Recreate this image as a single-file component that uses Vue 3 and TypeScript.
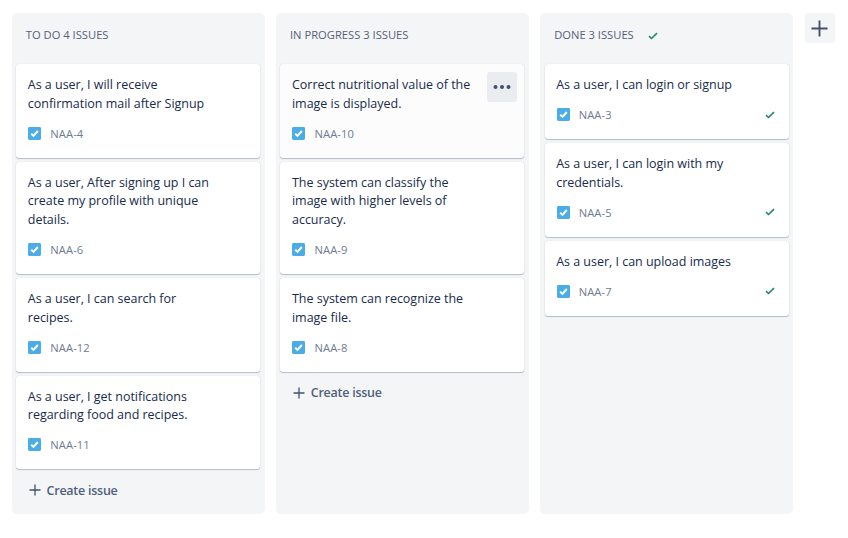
<script setup lang="ts">
interface Issue {
  key: string
  lines: string[]
  hovered?: boolean
}

interface Column {
  name: string
  issues: Issue[]
  done?: boolean
}

const columns: Column[] = [
  {
    name: 'TO DO',
    issues: [
      { key: 'NAA-4', lines: ['As a user, I will receive', 'confirmation mail after Signup'] },
      { key: 'NAA-6', lines: ['As a user, After signing up I can', 'create my profile with unique', 'details.'] },
      { key: 'NAA-12', lines: ['As a user, I can search for', 'recipes.'] },
      { key: 'NAA-11', lines: ['As a user, I get notifications', 'regarding food and recipes.'] },
    ],
  },
  {
    name: 'IN PROGRESS',
    issues: [
      { key: 'NAA-10', lines: ['Correct nutritional value of the', 'image is displayed.'], hovered: true },
      { key: 'NAA-9', lines: ['The system can classify the', 'image with higher levels of', 'accuracy.'] },
      { key: 'NAA-8', lines: ['The system can recognize the', 'image file.'] },
    ],
  },
  {
    name: 'DONE',
    done: true,
    issues: [
      { key: 'NAA-3', lines: ['As a user, I can login or signup'] },
      { key: 'NAA-5', lines: ['As a user, I can login with my', 'credentials.'] },
      { key: 'NAA-7', lines: ['As a user, I can upload images'] },
    ],
  },
]
</script>

<template>
  <main class="board">
    <section v-for="column in columns" :key="column.name" class="column">
      <header class="column-header">
        <h2>{{ column.name }} {{ column.issues.length }} ISSUES</h2>
        <svg v-if="column.done" class="tick" viewBox="0 0 10 8"><path d="M1 4.2 3.5 6.5 9 1.2" /></svg>
      </header>
      <div class="cards">
        <article v-for="issue in column.issues" :key="issue.key" class="card" :class="{ hovered: issue.hovered }">
          <p class="summary">
            <span v-for="line in issue.lines" :key="line">{{ line }}</span>
          </p>
          <footer class="meta">
            <svg class="task" viewBox="0 0 13 13">
              <rect width="13" height="13" rx="1.4" />
              <path d="M3.2 6.7 5.5 8.9 9.8 4" />
            </svg>
            <span class="key">{{ issue.key }}</span>
            <svg v-if="column.done" class="tick" viewBox="0 0 10 8"><path d="M1 4.2 3.5 6.5 9 1.2" /></svg>
          </footer>
          <button v-if="issue.hovered" class="more" aria-label="More actions">
            <svg viewBox="0 0 18 6"><circle cx="2.5" cy="3" r="2" /><circle cx="9" cy="3" r="2" /><circle cx="15.5" cy="3" r="2" /></svg>
          </button>
        </article>
      </div>
      <button v-if="!column.done" class="create">
        <svg viewBox="0 0 12 12"><path d="M6 .5v11M.5 6h11" /></svg>
        <span>Create issue</span>
      </button>
    </section>
    <button class="add-column" aria-label="Add column">
      <svg viewBox="0 0 18 18"><path d="M9 .5v17M.5 9h17" /></svg>
    </button>
  </main>
</template>

<style>
body {
  background: #fff;
}
</style>

<style scoped>
.board {
  box-sizing: border-box;
  display: flex;
  align-items: flex-start;
  gap: 11.2px;
  height: 538px;
  padding: 13px 12px 24px;
  font-family: "Segoe UI", "Open Sans", "Noto Sans", sans-serif;
}
button {
  border: 0;
  margin: 0;
  padding: 0;
  font-family: inherit;
}
.column {
  box-sizing: border-box;
  flex: none;
  width: 253px;
  height: 501px;
  padding: 0 4.8px 0 4.3px;
  border-radius: 5px;
  background: #f4f5f7;
}
.column-header {
  display: flex;
  align-items: center;
  gap: 14px;
  height: 44px;
  margin-bottom: 7px;
  padding-left: 9.5px;
}
h2 {
  margin: 0;
  font-size: 11.2px;
  font-weight: 500;
  line-height: 16px;
  letter-spacing: 0;
  color: #55617a;
}
.tick {
  width: 10px;
  height: 8px;
  fill: none;
  stroke: #1f8b60;
  stroke-width: 1.6;
}
.column-header .tick {
  margin-top: 2px;
}
.cards {
  display: flex;
  flex-direction: column;
  gap: 3.73px;
}
.card {
  box-sizing: border-box;
  position: relative;
  padding: 12px 11.5px 18px;
  border-radius: 3px;
  background: #fff;
  box-shadow: 0 1px 1px rgba(9, 30, 66, 0.25), 0 0 1px rgba(9, 30, 66, 0.18);
}
.card.hovered {
  background: #fcfcfc;
}
.summary {
  display: flex;
  flex-direction: column;
  margin: 0;
  font-size: 12.5px;
  line-height: 18.667px;
  letter-spacing: -0.02px;
  white-space: nowrap;
  color: #172b4d;
}
.meta {
  display: flex;
  align-items: center;
  height: 13px;
  margin-top: 13.57px;
}
.task {
  width: 13px;
  height: 13px;
  margin-left: 0.5px;
  fill: #4bade8;
}
.task path {
  fill: none;
  stroke: #fff;
  stroke-width: 2;
}
.key {
  margin-left: 9px;
  font-size: 11.2px;
  line-height: 13px;
  font-weight: 500;
  letter-spacing: 0.1px;
  color: #6f7b92;
}
.meta .tick {
  margin: 0 2.5px 0 auto;
}
.more {
  position: absolute;
  top: 8px;
  right: 7.5px;
  display: grid;
  place-items: center;
  width: 30px;
  height: 30px;
  border-radius: 3px;
  background: #ebecf0;
}
.more svg {
  width: 18px;
  height: 6px;
  fill: #42526e;
}
.create {
  display: flex;
  align-items: center;
  gap: 6px;
  height: 18px;
  margin: 12.5px 0 0 12.3px;
  background: none;
  font-size: 12.5px;
  font-weight: 600;
  line-height: 18px;
  letter-spacing: -0.25px;
  color: #505f79;
}
.create svg {
  width: 12px;
  height: 12px;
  margin-top: -1px;
  fill: none;
  stroke: #42526e;
  stroke-width: 1.3;
}
.add-column {
  display: grid;
  place-items: center;
  width: 30px;
  height: 30px;
  border-radius: 3px;
  background: #f4f5f7;
}
.add-column svg {
  width: 17px;
  height: 17px;
  fill: none;
  stroke: #42526e;
  stroke-width: 2;
}
</style>
